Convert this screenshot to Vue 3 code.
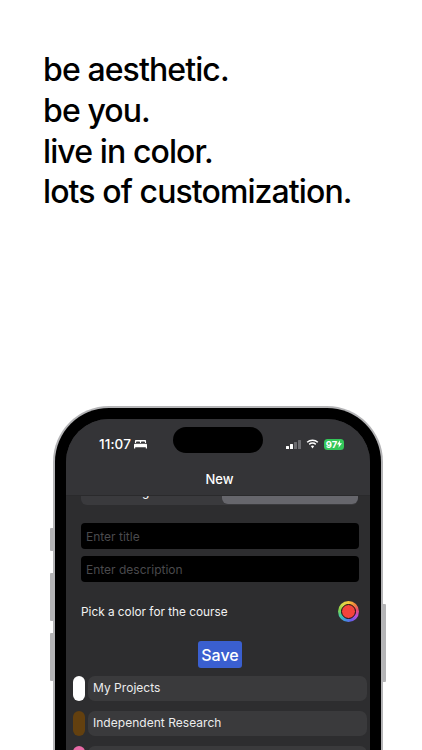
<script setup>
const courses = [
  { name: 'My Projects', color: '#ffffff' },
  { name: 'Independent Research', color: '#63400f' },
  { name: '', color: '#e86aa6' },
]
const lines = ['be aesthetic.', 'be you.', 'live in color.', 'lots of customization.']
</script>

<template>
  <main class="page">
    <h1 class="headline">
      <span v-for="line in lines" :key="line" class="line">{{ line }}</span>
    </h1>

    <div class="device">
      <span class="side left mute"></span>
      <span class="side left vol-up"></span>
      <span class="side left vol-down"></span>
      <span class="side right power"></span>

      <div class="bezel">
        <div class="screen">
          <span class="island"></span>

          <header class="topbar">
            <div class="status">
              <div class="status-left">
                <span class="time">11:07</span>
                <svg class="bed" viewBox="0 0 14 10" width="13" height="10">
                  <path fill="#fff" d="M2 0.6h10a1 1 0 0 1 1 1V4h-1.2V3a.8.8 0 0 0-.8-.8H8.3a.8.8 0 0 0-.8.8v1h-1V3a.8.8 0 0 0-.8-.8H3a.8.8 0 0 0-.8.8v1H1V1.600a1 1 0 0 1 1-1Z" />
                  <path fill="#fff" d="M1 4.700h12a1 1 0 0 1 1 1V9.800h-1.300V8.400H1.300v1.400H0V5.700a1 1 0 0 1 1-1Z" />
                </svg>
              </div>
              <div class="status-right">
                <span class="signal">
                  <i class="bar b1 on"></i><i class="bar b2 on"></i><i class="bar b3"></i><i class="bar b4"></i>
                </span>
                <svg class="wifi" viewBox="0 0 16 12" width="13" height="10">
                  <path fill="#fff" d="M8 2.200c2.300 0 4.400.9 6 2.400l1.200-1.300A10.400 10.400 0 0 0 8 .4 10.400 10.400 0 0 0 .8 3.300L2 4.600a8.700 8.700 0 0 1 6-2.400Z" />
                  <path fill="#fff" d="M8 5.800c1.300 0 2.500.5 3.400 1.300l1.200-1.300A6.700 6.700 0 0 0 8 4a6.700 6.700 0 0 0-4.600 1.800l1.200 1.300A5 5 0 0 1 8 5.800Z" />
                  <path fill="#fff" d="M8 7.700c-.8 0-1.500.3-2 .8l2 2.900 2-2.900c-.5-.5-1.200-.8-2-.8Z" />
                </svg>
                <span class="battery">97<svg viewBox="0 0 6 9" width="5" height="8"><path fill="#fff" d="M3.600 0 0 5h2.300L1.800 9 6 3.600H3.400Z" /></svg></span>
              </div>
            </div>
            <div class="title">New</div>
          </header>

          <section class="content">
            <div class="segments">
              <span class="segment first">Assignment</span>
              <span class="segment selected">Course</span>
            </div>

            <form class="form" @submit.prevent>
              <input class="field" type="text" placeholder="Enter title" />
              <input class="field" type="text" placeholder="Enter description" />
              <div class="picker">
                <span class="picker-label">Pick a color for the course</span>
                <span class="well"><span class="well-dot"></span></span>
              </div>
              <button class="save" type="submit">Save</button>
            </form>

            <ul class="courses">
              <li v-for="c in courses" :key="c.color" class="course">
                <span class="pill" :style="{ background: c.color }"></span>
                <span class="course-name">{{ c.name }}</span>
              </li>
            </ul>
          </section>
        </div>
      </div>
    </div>
  </main>
</template>

<style>
html, body { margin: 0; background: #fff; overflow: hidden; }
</style>

<style scoped>
.page {
  width: 422px;
  height: 750px;
  overflow: hidden;
  background: #fff;
  font-family: Inter, "Liberation Sans", sans-serif;
}
.headline {
  margin: 0;
  padding: 50px 0 0 43px;
  font-size: 32px;
  font-weight: 450;
  line-height: 40.75px;
  letter-spacing: -0.9px;
  color: #000;
}
.line { display: block; }

.device {
  position: relative;
  box-sizing: border-box;
  width: 330px;
  height: 500px;
  margin: 193px 0 0 53px;
  padding: 2px;
  border-radius: 56px 56px 0 0;
  background: #b4b4b6;
}
.side { position: absolute; width: 3px; background: #b4b4b6; }
.left { left: -3px; border-radius: 1px 0 0 1px; }
.right { right: -3px; border-radius: 0 1px 1px 0; }
.mute { top: 122px; height: 23px; }
.vol-up { top: 167px; height: 48px; }
.vol-down { top: 227px; height: 48px; }
.power { top: 198px; height: 78px; }

.bezel {
  box-sizing: border-box;
  height: 100%;
  padding: 11px 11px 0;
  border-radius: 54px 54px 0 0;
  background: #000;
}
.screen {
  position: relative;
  height: 100%;
  overflow: hidden;
  border-radius: 43px 43px 0 0;
  background: #2d2d2f;
  color: #fff;
}
.island {
  position: absolute;
  z-index: 2;
  top: 8px;
  left: 107px;
  width: 90px;
  height: 26px;
  border-radius: 13px;
  background: #000;
}
.topbar {
  position: relative;
  z-index: 1;
  height: 77px;
  box-sizing: border-box;
  background: #343437;
  border-bottom: 1px solid #2a2a2c;
}
.status {
  display: flex;
  justify-content: space-between;
  align-items: center;
  height: 26px;
  padding: 12px 26px 0 33px;
}
.status-left { display: flex; align-items: center; gap: 3px; }
.time { font-size: 13.5px; font-weight: 450; letter-spacing: 0.1px; }
.status-right { display: flex; align-items: center; gap: 5px; }
.signal { display: flex; align-items: flex-end; gap: 1.500px; height: 9px; }
.bar { width: 2.600px; border-radius: 0.5px; background: #6c6c70; }
.bar.on { background: #fff; }
.b1 { height: 3px; }
.b2 { height: 5px; }
.b3 { height: 7px; }
.b4 { height: 9px; }
.wifi { width: 13px; }
.battery {
  display: flex;
  align-items: center;
  justify-content: center;
  width: 20px;
  height: 11px;
  border-radius: 3.500px;
  background: #34c759;
  font-size: 9.5px;
  font-weight: 700;
  line-height: 11px;
}
.title {
  margin-top: 14px;
  padding-left: 3px;
  text-align: center;
  font-size: 13px;
  font-weight: 450;
  line-height: 16px;
}

.content { padding: 0 3px 0 7px; }
.segments {
  display: flex;
  margin: -19px 0 0 8px;
  width: 277px;
  height: 28px;
  border-radius: 6px;
  background: #3a3a3d;
}
.segment {
  display: flex;
  align-items: center;
  justify-content: center;
  border-radius: 6px;
  font-size: 12px;
}
.segment.first { flex: 0 0 141px; }
.segment.selected { flex: 1; height: 27px; background: #66666c; }

.form {
  display: flex;
  flex-direction: column;
  gap: 7px;
  margin: 18px 0 0 8px;
  width: 278px;
}
.field {
  box-sizing: border-box;
  height: 26px;
  padding: 0 5px;
  border: 0;
  border-radius: 4px;
  outline: 0;
  background: #000;
  color: #fff;
  font: 400 12px Inter, "Liberation Sans", sans-serif;
}
.field::placeholder { color: #4a4a4d; opacity: 1; }
.picker {
  display: flex;
  justify-content: space-between;
  align-items: center;
  height: 21px;
  margin-top: 12px;
}
.picker-label { font-size: 11.8px; line-height: 16px; color: #f2f2f2; }
.well {
  display: flex;
  align-items: center;
  justify-content: center;
  box-sizing: border-box;
  width: 21px;
  height: 21px;
  border-radius: 50%;
  background: conic-gradient(#f5c93c, #f0883a, #e9486f, #b94fd8, #6a5ae8, #3f8fe0, #3fc7a9, #7fd34b, #d8d94a, #f5c93c);
}
.well-dot {
  box-sizing: border-box;
  width: 15.5px;
  height: 15.5px;
  border-radius: 50%;
  border: 1.5px solid #111;
  background: #f4433c;
}
.save {
  align-self: center;
  width: 44px;
  height: 27px;
  margin-top: 12px;
  padding: 0;
  border: 0;
  border-radius: 3px;
  background: #3a5fd0;
  color: #fff;
  font: 500 16px Inter, "Liberation Sans", sans-serif;
}

.courses {
  display: flex;
  flex-direction: column;
  gap: 10px;
  margin: 8px 0 0;
  padding: 0;
  list-style: none;
}
.course { display: flex; align-items: stretch; gap: 3px; height: 25px; }
.pill { width: 12px; border-radius: 6px; }
.course-name {
  flex: 1;
  padding-left: 5px;
  border-radius: 7px;
  background: #3a3a3c;
  color: #ececec;
  font-size: 12px;
  letter-spacing: 0.03px;
  line-height: 24px;
}
</style>
